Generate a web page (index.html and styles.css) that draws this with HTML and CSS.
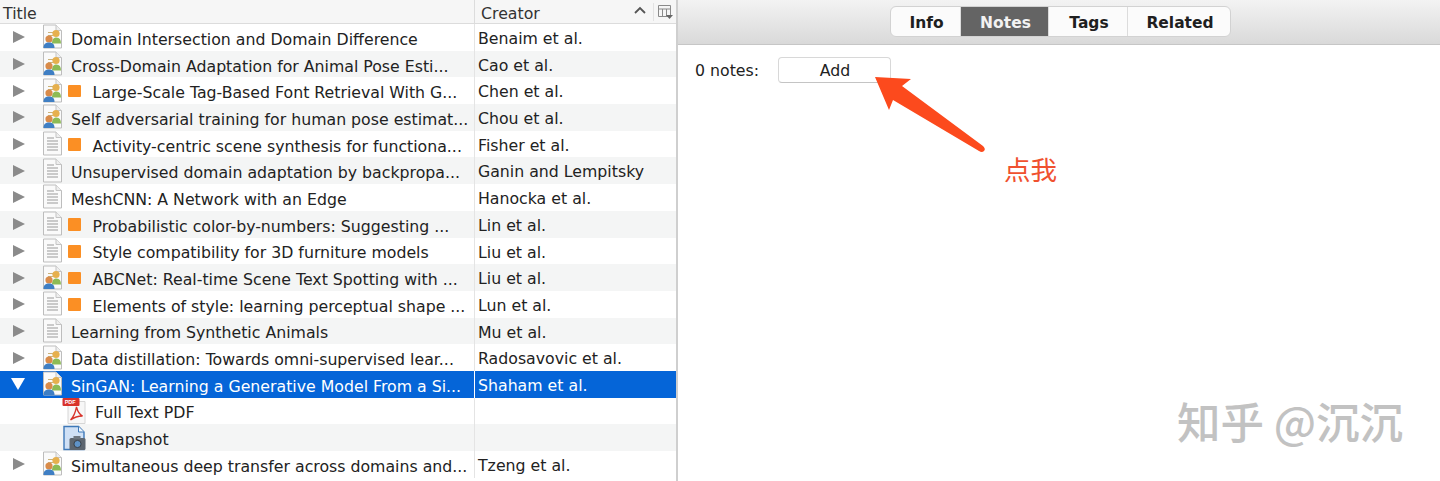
FILE: index.html
```html
<!DOCTYPE html>
<html lang="en">
<head>
<meta charset="utf-8">
<title>Notes</title>
<link rel="stylesheet" href="styles.css">
</head>
<body>
<svg class="defs" width="0" height="0" aria-hidden="true">
  <symbol id="doc" viewBox="2.500 0.500 20 25">
    <path d="M3.500 1.500H16L21.500 7V24.500H3.500Z" fill="#fafafa" stroke="#bdbdbd"/>
    <path d="M16 1.500V7H21.500" fill="#eee" stroke="#c4c4c4"/>
    <path d="M7 7.500H14M7 10.500H18M7 13.500H18M7 16.500H18M7 19.500H18" stroke="#9a9a9a" fill="none"/>
  </symbol>
  <symbol id="paper" viewBox="2.500 0.500 20 25">
    <path d="M3.500 1.500H16L21.500 7V24.500H3.500Z" fill="#fafafa" stroke="#bdbdbd"/>
    <path d="M16 1.500V7H21.500" fill="#eee" stroke="#c4c4c4"/>
    <path d="M8 9H13M8 12H13" stroke="#c9b27a" fill="none"/>
    <circle cx="16" cy="10" r="3.600" fill="#e6b04e"/>
    <path d="M12 20C12 15.500 14 14 16.500 14C19.500 14 21 16 21 20Z" fill="#8dbb55"/>
    <circle cx="9" cy="15.500" r="3.600" fill="#d98b4a"/>
    <path d="M3.500 24.500C3.500 20.500 5.500 19 9 19C12.500 19 14.500 20.500 14.500 24.500Z" fill="#3f7fc4"/>
  </symbol>
  <symbol id="snap" viewBox="0 0 24 26">
    <path d="M1.500 1.500H16L21.500 7V24.500H1.500Z" fill="#cfe0f5" stroke="#3d78b8" stroke-width="1.400"/>
    <path d="M16 1.500V7H21.500" fill="#f1f6fc" stroke="#3d78b8"/>
    <rect x="7" y="13" width="16" height="12" rx="1.500" fill="#5d6670"/>
    <rect x="11" y="11" width="7" height="3" fill="#6d7680"/>
    <circle cx="15" cy="19" r="3.600" fill="#5f93c8" stroke="#3a4148"/>
  </symbol>
</svg>

<div class="app">
  <section class="library">
    <div class="table-head">
      <div class="head-title">Title</div>
      <div class="head-creator">
        <span class="creator-label">Creator</span>
        <svg class="sort" width="14" height="8" viewBox="0 0 14 8"><path d="M2 7L7 2L12 7" fill="none" stroke="#555" stroke-width="1.800"/></svg>
        <svg class="picker" width="18" height="16" viewBox="0 0 18 16"><path d="M1.500 1.500H13.500V12.500H1.500ZM1.500 5H13.500M5.500 5V12.500M9.500 5V12.500" fill="none" stroke="#8a8a8a"/><path d="M9 11H16L12.500 15Z" fill="#666"/></svg>
      </div>
    </div>
    <div class="rows">
      <div class="row"><div class="cell-title"><i class="twisty"></i><svg class="icon"><use href="#paper"/></svg><span class="name">Domain Intersection and Domain Difference</span></div><div class="cell-creator">Benaim et al.</div></div>
      <div class="row"><div class="cell-title"><i class="twisty"></i><svg class="icon"><use href="#paper"/></svg><span class="name">Cross-Domain Adaptation for Animal Pose Esti...</span></div><div class="cell-creator">Cao et al.</div></div>
      <div class="row"><div class="cell-title"><i class="twisty"></i><svg class="icon"><use href="#paper"/></svg><i class="tag"></i><span class="name">Large-Scale Tag-Based Font Retrieval With G...</span></div><div class="cell-creator">Chen et al.</div></div>
      <div class="row"><div class="cell-title"><i class="twisty"></i><svg class="icon"><use href="#paper"/></svg><span class="name">Self adversarial training for human pose estimat...</span></div><div class="cell-creator">Chou et al.</div></div>
      <div class="row"><div class="cell-title"><i class="twisty"></i><svg class="icon"><use href="#doc"/></svg><i class="tag"></i><span class="name">Activity-centric scene synthesis for functiona...</span></div><div class="cell-creator">Fisher et al.</div></div>
      <div class="row"><div class="cell-title"><i class="twisty"></i><svg class="icon"><use href="#doc"/></svg><span class="name">Unsupervised domain adaptation by backpropa...</span></div><div class="cell-creator">Ganin and Lempitsky</div></div>
      <div class="row"><div class="cell-title"><i class="twisty"></i><svg class="icon"><use href="#doc"/></svg><span class="name">MeshCNN: A Network with an Edge</span></div><div class="cell-creator">Hanocka et al.</div></div>
      <div class="row"><div class="cell-title"><i class="twisty"></i><svg class="icon"><use href="#doc"/></svg><i class="tag"></i><span class="name">Probabilistic color-by-numbers: Suggesting ...</span></div><div class="cell-creator">Lin et al.</div></div>
      <div class="row"><div class="cell-title"><i class="twisty"></i><svg class="icon"><use href="#doc"/></svg><i class="tag"></i><span class="name">Style compatibility for 3D furniture models</span></div><div class="cell-creator">Liu et al.</div></div>
      <div class="row"><div class="cell-title"><i class="twisty"></i><svg class="icon"><use href="#paper"/></svg><i class="tag"></i><span class="name">ABCNet: Real-time Scene Text Spotting with ...</span></div><div class="cell-creator">Liu et al.</div></div>
      <div class="row"><div class="cell-title"><i class="twisty"></i><svg class="icon"><use href="#doc"/></svg><i class="tag"></i><span class="name">Elements of style: learning perceptual shape ...</span></div><div class="cell-creator">Lun et al.</div></div>
      <div class="row"><div class="cell-title"><i class="twisty"></i><svg class="icon"><use href="#doc"/></svg><span class="name">Learning from Synthetic Animals</span></div><div class="cell-creator">Mu et al.</div></div>
      <div class="row"><div class="cell-title"><i class="twisty"></i><svg class="icon"><use href="#paper"/></svg><span class="name">Data distillation: Towards omni-supervised lear...</span></div><div class="cell-creator">Radosavovic et al.</div></div>
      <div class="row selected"><div class="cell-title"><i class="twisty open"></i><svg class="icon"><use href="#paper"/></svg><span class="name">SinGAN: Learning a Generative Model From a Si...</span></div><div class="cell-creator">Shaham et al.</div></div>
      <div class="row"><div class="cell-title child"><svg class="icon icon-att" viewBox="0 0 24 26">
        <path d="M5.500 3.500H22.500V25.500H5.500Z" fill="#f7f7f7" stroke="#d6d6d6"/>
        <rect x="0" y="0" width="17" height="8" rx="1" fill="#d8332a"/>
        <text x="2.200" y="6.200" class="pdf-tag">PDF</text>
        <path d="M14 9C13 14 11 19 8 22C12 19 16 18 20 18C16 16 15 13 14 9Z" fill="none" stroke="#d8332a" stroke-width="1.300"/>
      </svg><span class="name">Full Text PDF</span></div><div class="cell-creator"></div></div>
      <div class="row"><div class="cell-title child"><svg class="icon icon-att"><use href="#snap"/></svg><span class="name">Snapshot</span></div><div class="cell-creator"></div></div>
      <div class="row"><div class="cell-title"><i class="twisty"></i><svg class="icon"><use href="#paper"/></svg><span class="name">Simultaneous deep transfer across domains and...</span></div><div class="cell-creator">Tzeng et al.</div></div>
    </div>
  </section>

  <section class="detail">
    <div class="toolbar">
      <div class="tabs">
        <div class="tab t-info">Info</div>
        <div class="tab t-notes active">Notes</div>
        <div class="tab t-tags">Tags</div>
        <div class="tab t-rel">Related</div>
      </div>
    </div>
    <div class="notes-line">
      <span class="notes-count">0 notes:</span>
      <button class="add">Add</button>
    </div>
  </section>
</div>

<svg class="arrow" width="120" height="110" viewBox="0 0 120 110"><path d="M0 0L36 2L27 9L108 69Q111 72 109 74Q107 76 104 74L18 23L14 33Z" fill="#fc4a1d"/></svg>
<div class="callout">点我</div>
<div class="watermark">知乎 @沉沉</div>
</body>
</html>
```
FILE: styles.css
```css
* { box-sizing: border-box; }
html, body { margin: 0; padding: 0; }
body {
  width: 1440px;
  height: 481px;
  overflow: hidden;
  background: #fff;
  font-family: "DejaVu Sans", "Noto Sans CJK SC", sans-serif;
  position: relative;
  color: #222;
}
.defs { position: absolute; }
.pdf-tag { font: bold 5.500px "Liberation Sans", sans-serif; fill: #fff; }
.app { display: flex; height: 481px; }

.library { width: 678px; flex: none; border-right: 2px solid #cfcfcf; overflow: hidden; }
.table-head {
  display: flex;
  height: 24px;
  background: #f6f6f6;
  border-bottom: 1px solid #dcdcdc;
  font-size: 15.750px;
  color: #333;
}
.head-title { width: 474px; flex: none; padding-left: 3px; line-height: 27px; }
.head-creator {
  flex: 1;
  display: flex;
  align-items: center;
  padding-left: 6px;
  border-left: 1px solid #dcdcdc;
}
.creator-label { line-height: 19px; padding-top: 4px; }
.sort { margin-left: auto; margin-right: 6px; margin-top: -4px; }
.picker { margin-right: 1px; border-left: 1px solid #e3e3e3; width: 22px; height: 18px; padding-left: 3px; }

.row { display: flex; height: 26.700px; font-size: 15.750px; background: #fff; }
.row:nth-child(even) { background: #f4f5f5; }
.cell-title {
  width: 474px;
  flex: none;
  display: flex;
  align-items: center;
  padding: 4px 0 0 13px;
  overflow: hidden;
}
.cell-title.child { padding-left: 62px; }
.cell-creator { flex: 1; padding: 2px 0 0 3px; line-height: 26px; border-left: 1px solid #e4e4e4; white-space: nowrap; overflow: hidden; }
.name { white-space: nowrap; margin-left: 3px; }
.twisty {
  flex: none;
  width: 0;
  height: 0;
  border-left: 12px solid #8b8b8b;
  border-top: 6.500px solid transparent;
  border-bottom: 6.500px solid transparent;
  margin-right: 17px;
  margin-top: -4px;
}
.twisty.open {
  border-left: 7px solid transparent;
  border-right: 7px solid transparent;
  border-top: 12px solid #fff;
  border-bottom: 0;
  margin-left: -2px;
  margin-right: 17px;
}
.icon { flex: none; width: 21px; height: 25px; margin-right: 5px; margin-top: -5px; }
.icon-att { width: 25px; height: 26px; margin-right: 5px; margin-top: -4px; }
.tag { flex: none; width: 12.500px; height: 12.500px; border-radius: 1px; background: #fb8f24; margin: -3px 9px 0 0; }
.row.selected { background: #0565d8; color: #fff; }
.row.selected .cell-creator { border-left-color: #fff; }

.detail { flex: 1; min-width: 0; }
.toolbar {
  height: 45px;
  display: flex;
  justify-content: center;
  padding-top: 6px;
  padding-left: 3px;
  background: linear-gradient(#f3f3f3, #d9d9d9);
  border-bottom: 1px solid #c6c6c6;
}
.tabs {
  display: flex;
  height: 31px;
  border-radius: 6px;
  background: #fbfbfb;
  border: 1px solid #d2d2d2;
  font-size: 15.500px;
  font-weight: 700;
  color: #1f1f1f;
  overflow: hidden;
}
.tab { display: flex; align-items: center; justify-content: center; border-right: 1px solid #dcdcdc; padding: 2px 0 0 2px; }
.tab:last-child { border-right: 0; }
.t-info { width: 70px; }
.t-notes { width: 88px; }
.t-tags { width: 79px; }
.t-rel { width: 102px; }
.tab.active { background: #646464; color: #f2f2f2; }

.notes-line { display: flex; align-items: center; padding: 12px 0 0 17px; font-size: 15.750px; }
.notes-count { width: 83px; flex: none; }
.add {
  width: 113px;
  height: 26px;
  padding: 0 0 0 1px;
  background: #fff;
  border: 1px solid #d8d8d8;
  border-bottom-color: #c4c4c4;
  border-radius: 4px;
  font: inherit;
  color: #222;
}

.arrow { position: absolute; left: 875px; top: 77px; }
.callout { position: absolute; left: 1004px; top: 153px; font: 400 26.500px/32px "Noto Sans CJK SC", sans-serif; color: #f0512f; }
.watermark {
  position: absolute;
  left: 1177px;
  top: 396px;
  font: 500 43.500px/50px "Noto Sans CJK SC", sans-serif;
  color: #c2c2c2;
  white-space: nowrap;
}
```
